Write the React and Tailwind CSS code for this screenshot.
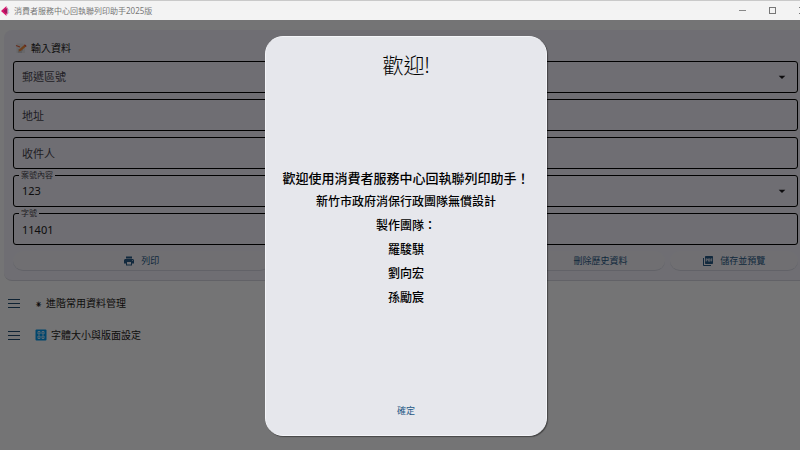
import React, { useState } from 'react';
import { MdPrint, MdPictureAsPdf, MdArrowDropDown } from 'react-icons/md';

const credits = ['新竹市政府消保行政團隊無償設計', '製作團隊：', '羅駿騏', '劉向宏', '孫勵宸'];

const fieldClass =
  'block h-8 w-full appearance-none rounded-[3px] border border-black bg-transparent px-2 text-[11px] placeholder:text-[#49454f] placeholder:opacity-100 outline-none';

const buttonClass =
  'flex h-5 items-center justify-center gap-1.5 rounded-full border-b border-[#d5d5e2] bg-[#f3f2f9] text-[9px] text-[#285a86]';

const LogoIcon = () => (
  <svg viewBox="0 0 10 10" className="h-2.5 w-2.5" aria-hidden="true">
    <path d="M0 5 L5.5 0 V3.5 L4 5 L5.5 6.5 V10 Z" fill="#d6186e" />
    <path d="M2.5 5 L6.5 1.5 V8.5 Z" fill="#a3155c" />
    <path d="M7 2.5 L8.5 4 L7.5 5 L8.5 6.5 L7 8 Z" fill="#b9cfe0" />
  </svg>
);

const MemoIcon = () => (
  <svg viewBox="0 0 12 12" className="h-3 w-3" aria-hidden="true">
    <path d="M1.5 1.5 H8 L10 4 V11 H1.5 Z" fill="#e2e2e6" />
    <path d="M3 8 H8 M3 10 H7" stroke="#a9a9b4" strokeWidth="0.8" />
    <path d="M3.5 9.5 L4.3 7.2 L9.8 2.6 L11.4 4.2 L5.8 8.9 Z" fill="#f08a3c" />
    <path d="M9.2 3.1 L10 2.4 L11.6 4 L10.8 4.7 Z" fill="#d9414e" />
    <path d="M1 3.5 L5 5" stroke="#e0603c" strokeWidth="1.2" />
  </svg>
);

const NumbersIcon = () => (
  <svg viewBox="0 0 12 12" className="h-3 w-3" aria-hidden="true">
    <rect x="0.5" y="0.5" width="11" height="11" rx="1" fill="#0098ee" />
    <path d="M3 2.5 H5 V5 H3 Z M7 2.5 H9 V5 H7 Z M3 7 H5 V9.5 H3 Z M7 7 H9 V9.5 H7 Z" fill="none" stroke="#d9f0ff" strokeWidth="0.9" />
  </svg>
);

const MenuIcon = () => (
  <svg viewBox="0 0 12 10" className="h-2.5 w-3" aria-hidden="true">
    <path d="M0 1.5 H12 M0 5.5 H12 M0 9.5 H12" stroke="#1f4a70" />
  </svg>
);

const FloatingLabel = ({ htmlFor, children }) => (
  <label htmlFor={htmlFor} className="absolute -top-1 left-1.5 bg-[#f1f0fa] px-0.5 text-[8px] leading-2 text-[#49454f]">
    {children}
  </label>
);

const SelectField = ({ children, ...props }) => (
  <>
    <select className={`${fieldClass} ${props.value ? 'text-[#1d1b20]' : 'text-[#49454f]'}`} {...props}>
      {children}
    </select>
    <MdArrowDropDown className="pointer-events-none absolute top-2 right-2 h-4 w-4 text-[#1d1b20]" />
  </>
);

const TitleBar = () => (
  <header className="flex h-5 items-center justify-between border-t border-[#c9c9c9] bg-[#f3f3f3] pl-px text-[8px] text-[#777]">
    <div className="flex items-center gap-[3px]">
      <LogoIcon />
      <h1>消費者服務中心回執聯列印助手2025版</h1>
    </div>
    <div className="-mr-1.5 flex items-center gap-[23px]">
      <button aria-label="最小化">
        <svg viewBox="0 0 7 7" className="h-[7px] w-[7px]">
          <path d="M0 3.5 H7" stroke="#888" />
        </svg>
      </button>
      <button aria-label="最大化">
        <svg viewBox="0 0 7 7" className="h-[7px] w-[7px]">
          <rect x="0.5" y="0.5" width="6" height="6" fill="none" stroke="#777" />
        </svg>
      </button>
      <button aria-label="關閉">
        <svg viewBox="0 0 7 7" className="h-[7px] w-[7px]">
          <path d="M0 0 L7 7 M7 0 L0 7" stroke="#777" />
        </svg>
      </button>
    </div>
  </header>
);

const App = () => {
  const [open, setOpen] = useState(true);
  const [zip, setZip] = useState('');
  const [caseText, setCaseText] = useState('123');
  const [docNo, setDocNo] = useState('11401');

  return (
    <div className="flex min-h-screen flex-col overflow-hidden font-['Noto_Sans','Noto_Sans_CJK_TC',sans-serif]">
      <TitleBar />
      <div className="relative flex grow flex-col">
        <main className="grow bg-[#fdfdfe] pt-2.5 pl-1 text-[#1d1b20]">
          <section className="rounded-l-lg border-b border-[#d5d5e0] bg-[#f1f0fa] pt-2.5 pr-0.5 pb-[9px] pl-[9px]">
            <h2 className="flex h-4 items-center gap-1 pl-0.5 text-[10px]">
              <MemoIcon />
              輸入資料
            </h2>
            <div className="mt-[5px] flex flex-col gap-1.5">
              <div className="relative">
                <SelectField aria-label="郵遞區號" value={zip} onChange={(e) => setZip(e.target.value)}>
                  <option value="">郵遞區號</option>
                  <option value="300">300</option>
                </SelectField>
              </div>
              <input className={fieldClass} aria-label="地址" placeholder="地址" />
              <input className={fieldClass} aria-label="收件人" placeholder="收件人" />
              <div className="relative">
                <SelectField id="caseText" value={caseText} onChange={(e) => setCaseText(e.target.value)}>
                  <option value="123">123</option>
                </SelectField>
                <FloatingLabel htmlFor="caseText">案號內容</FloatingLabel>
              </div>
              <div className="relative">
                <input id="docNo" className={fieldClass} value={docNo} onChange={(e) => setDocNo(e.target.value)} />
                <FloatingLabel htmlFor="docNo">字號</FloatingLabel>
              </div>
            </div>
            <div className="mt-1.5 grid grid-cols-[2fr_2fr_1fr_1fr] gap-[5px]">
              <button className={buttonClass}>
                <MdPrint className="h-3 w-3" />
                列印
              </button>
              <button className={`${buttonClass} col-start-3`}>刪除歷史資料</button>
              <button className={buttonClass}>
                <MdPictureAsPdf className="h-3 w-3" />
                儲存並預覽
              </button>
            </div>
          </section>
          <nav className="flex flex-col gap-4 pt-3.5 pl-1 text-[10px]">
            <button className="flex h-4 items-center gap-[15px]">
              <MenuIcon />
              <span className="flex items-center gap-1">
                <span className="w-[7px] text-center">⁕</span>
                進階常用資料管理
              </span>
            </button>
            <button className="flex h-4 items-center gap-[15px]">
              <MenuIcon />
              <span className="flex items-center gap-1">
                <NumbersIcon />
                字體大小與版面設定
              </span>
            </button>
          </nav>
        </main>

        {open && (
          <div className="absolute inset-0 flex justify-center bg-black/54 pt-4 pb-3.5 pl-3">
            <div
              role="dialog"
              aria-modal="true"
              aria-labelledby="welcome"
              className="flex w-[282px] flex-col items-center rounded-[18px] border border-[#f4f5f9] bg-[#e6e7ec] px-3 pt-3.5 pb-4 text-black shadow-[1px_1px_1px_rgba(0,0,0,0.4)]"
            >
              <h2 id="welcome" className="text-[21px] leading-7 font-light">歡迎!</h2>
              <div className="flex grow flex-col items-center justify-center pb-1.5 text-center text-xs leading-6 font-medium">
                <p className="text-[13px] leading-6 whitespace-nowrap">歡迎使用消費者服務中心回執聯列印助手！</p>
                {credits.map((line) => (
                  <p key={line}>{line}</p>
                ))}
              </div>
              <button className="h-4 px-3 text-[9px] text-[#285a86]" onClick={() => setOpen(false)}>
                確定
              </button>
            </div>
          </div>
        )}
      </div>
    </div>
  );
};

export default App;
